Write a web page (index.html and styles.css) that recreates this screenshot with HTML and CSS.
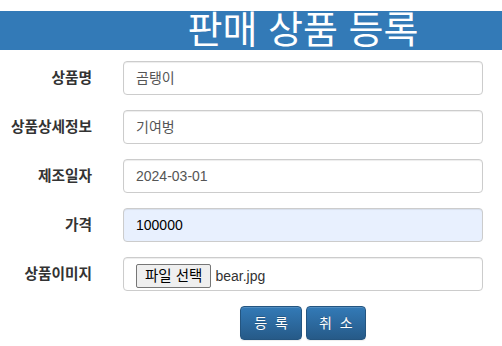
FILE: index.html
```html
<!DOCTYPE html>
<html lang="ko">
  <head>
    <meta charset="UTF-8" />
    <meta name="viewport" content="width=device-width, initial-scale=1.0" />
    <title>판매 상품 등록</title>
    <link rel="stylesheet" href="styles.css">
  </head>
  <body>
    <div class="page-header">
      <h1 class="title">판매 상품 등록</h1>
    </div>

    <form class="product-form">
      <div class="form-row">
        <label class="form-label">상품명</label>
        <div class="form-control">곰탱이</div>
      </div>
      <div class="form-row">
        <label class="form-label">상품상세정보</label>
        <div class="form-control">기여벙</div>
      </div>
      <div class="form-row">
        <label class="form-label">제조일자</label>
        <div class="form-control">2024-03-01</div>
      </div>
      <div class="form-row">
        <label class="form-label">가격</label>
        <div class="form-control autofilled">100000</div>
      </div>
      <div class="form-row">
        <label class="form-label">상품이미지</label>
        <div class="form-control file-control">
          <span class="file-btn">파일 선택</span>
          <span class="file-name">bear.jpg</span>
        </div>
      </div>
      <div class="form-row">
        <div></div>
        <div class="actions">
          <button type="button" class="btn btn-primary wide">등 록</button>
          <button type="button" class="btn btn-primary">취 소</button>
        </div>
      </div>
    </form>
  </body>
</html>
```

FILE: styles.css
```css
* {
  margin: 0;
  padding: 0;
  box-sizing: border-box;
}

body {
  font-family: "Liberation Sans", "Noto Sans CJK KR", sans-serif;
  font-size: 14px;
  line-height: 20px;
  color: #333;
  background: #fff;
  padding-top: 11px;
}

.page-header {
  background: #337ab7;
  height: 39px;
  display: grid;
  grid-template-columns: 123px 360px;
}

.title {
  grid-column: 2;
  text-align: center;
  color: #fff;
  font-size: 38px;
  font-weight: 400;
  line-height: 32px;
  font-family: "Noto Sans CJK KR", sans-serif;
}

.product-form {
  padding-top: 11px;
}

.form-row {
  display: grid;
  grid-template-columns: 92px 360px;
  column-gap: 31px;
  margin-bottom: 15px;
}

.form-label {
  text-align: right;
  font-weight: bold;
  font-size: 14.7px;
  padding-top: 7px;
  color: #333;
}

.form-control {
  height: 34px;
  padding: 6px 12px;
  border: 1px solid #ccc;
  border-radius: 4px;
  color: #555;
  box-shadow: inset 0 1px 1px rgba(0, 0, 0, 0.075);
}

.autofilled {
  background: #e8f0fe;
  color: #000;
}

.file-control {
  display: flex;
  align-items: flex-start;
  white-space: nowrap;
}

.file-btn {
  height: 24px;
  padding: 1px 8px;
  line-height: 20px;
  background: #efefef;
  border: 1px solid #767676;
  border-radius: 2px;
  color: #000;
  font-size: 14.5px;
  margin-right: 4px;
}

.file-name {
  color: #333;
  line-height: 22px;
  padding-top: 1px;
}

.actions {
  display: flex;
  justify-content: center;
  gap: 4px;
}

.btn {
  height: 34px;
  padding: 6px 12px;
  font-family: inherit;
  font-size: 14px;
  line-height: 20px;
  border-radius: 4px;
  cursor: pointer;
}

.btn-primary {
  color: #fff;
  background: linear-gradient(to bottom, #337ab7 0, #265a88 100%);
  border: 1px solid #245580;
  text-shadow: 0 -1px 0 rgba(0, 0, 0, 0.2);
  box-shadow: inset 0 1px 0 rgba(255, 255, 255, 0.15), 0 1px 1px rgba(0, 0, 0, 0.075);
  word-spacing: 4px;
}

.btn-primary.wide {
  padding: 6px 13px;
}
```
